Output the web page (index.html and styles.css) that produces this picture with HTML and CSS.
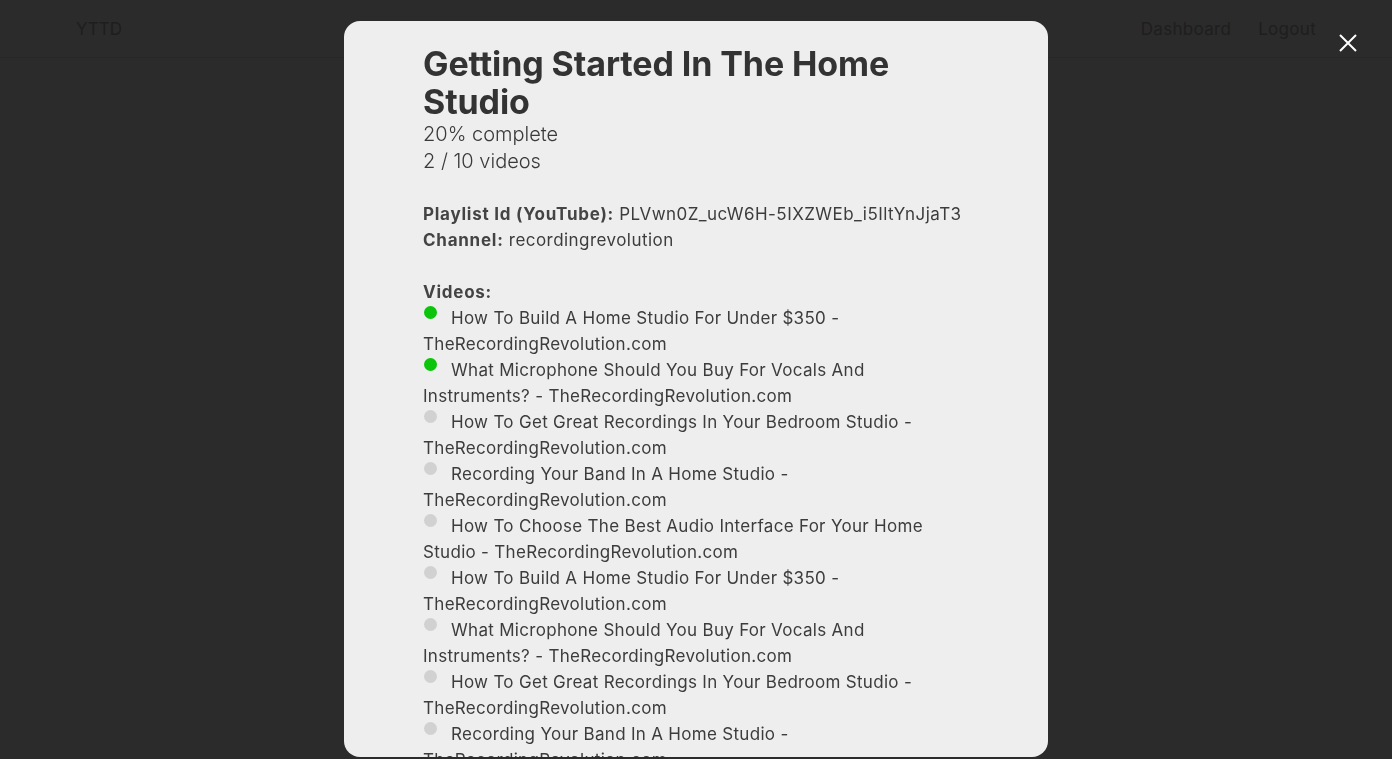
FILE: index.html
```html
<!DOCTYPE html>
<html lang="en">
<head>
<meta charset="utf-8">
<title>YTTD</title>
<link rel="stylesheet" href="styles.css">
</head>
<body>
<header class="nav">
  <div class="brand">YTTD</div>
  <nav class="links">
    <a href="#">Dashboard</a>
    <a href="#">Logout</a>
  </nav>
</header>
<main class="page"></main>

<div class="overlay">
  <button class="close" aria-label="Close">
    <svg width="18" height="18" viewBox="0 0 18 18"><path d="M1 1L17 17M17 1L1 17" stroke="#fff" stroke-width="2" fill="none"/></svg>
  </button>
  <div class="modal">
    <h1 class="title">Getting Started In The Home Studio</h1>
    <p class="stat">20% complete</p>
    <p class="stat">2 / 10 videos</p>

    <div class="meta">
      <div><b>Playlist Id (YouTube):</b> PLVwn0Z_ucW6H-5IXZWEb_i5IltYnJjaT3</div>
      <div><b>Channel:</b> recordingrevolution</div>
    </div>

    <div class="videos">
      <div class="videos-head"><b>Videos:</b></div>
      <ul class="list">
        <li><span class="dot done"></span>How To Build A Home Studio For Under $350 - TheRecordingRevolution.com</li>
        <li><span class="dot done"></span>What Microphone Should You Buy For Vocals And Instruments? - TheRecordingRevolution.com</li>
        <li><span class="dot"></span>How To Get Great Recordings In Your Bedroom Studio - TheRecordingRevolution.com</li>
        <li><span class="dot"></span>Recording Your Band In A Home Studio - TheRecordingRevolution.com</li>
        <li><span class="dot"></span>How To Choose The Best Audio Interface For Your Home Studio - TheRecordingRevolution.com</li>
        <li><span class="dot"></span>How To Build A Home Studio For Under $350 - TheRecordingRevolution.com</li>
        <li><span class="dot"></span>What Microphone Should You Buy For Vocals And Instruments? - TheRecordingRevolution.com</li>
        <li><span class="dot"></span>How To Get Great Recordings In Your Bedroom Studio - TheRecordingRevolution.com</li>
        <li><span class="dot"></span>Recording Your Band In A Home Studio - TheRecordingRevolution.com</li>
        <li><span class="dot"></span>How To Choose The Best Audio Interface For Your Home Studio - TheRecordingRevolution.com</li>
      </ul>
    </div>
  </div>
</div>
</body>
</html>
```

FILE: styles.css
```css
* { box-sizing: border-box; }
html, body { margin: 0; height: 100%; }
body {
  background: #2b2b2b;
  font-family: Inter, "Noto Sans", "Liberation Sans", sans-serif;
  overflow: hidden;
}
.nav {
  height: 58px;
  display: flex;
  align-items: center;
  justify-content: space-between;
  padding: 0 76px;
  border-bottom: 1px solid #272727;
  color: #1e1e1e;
  font-size: 17px;
}
.links { display: flex; gap: 27px; letter-spacing: 0.3px; }
.links a { color: #1e1e1e; text-decoration: none; }

.overlay {
  position: fixed;
  inset: 0;
  display: flex;
  justify-content: center;
  align-items: flex-start;
  padding-top: 21px;
}
.close {
  position: absolute;
  top: 34px;
  right: 35px;
  background: none;
  border: 0;
  padding: 0;
  width: 18px;
  height: 18px;
  cursor: pointer;
}
.close svg { display: block; }
.modal {
  width: 704px;
  height: 736px;
  background: #eeeeee;
  border-radius: 16px;
  padding: 24px 79px;
  overflow: hidden;
  color: #3c3c3c;
}
.title {
  margin: 0;
  font-size: 34px;
  line-height: 38px;
  font-weight: 700;
  color: #333;
  letter-spacing: -0.1px;
}
.stat {
  margin: 0;
  font-size: 20px;
  line-height: 27px;
  font-weight: 300;
  color: #3a3a3a;
}
.meta {
  margin-top: 26px;
  font-size: 17px;
  line-height: 26px;
  letter-spacing: 0.45px;
}
.meta b, .videos b { font-weight: 700; color: #444; letter-spacing: 0.75px; }
.videos {
  margin-top: 26px;
  font-size: 17px;
  line-height: 26px;
}
.list { list-style: none; margin: 0; padding: 0; }
.list li { letter-spacing: 0.3px; }
.dot {
  display: inline-block;
  width: 13px;
  height: 13px;
  border-radius: 50%;
  background: #d1d1d1;
  vertical-align: top;
  margin-top: 1px;
  margin-left: 1px;
  margin-right: 14px;
}
.dot.done { background: #0bc40b; }
```
